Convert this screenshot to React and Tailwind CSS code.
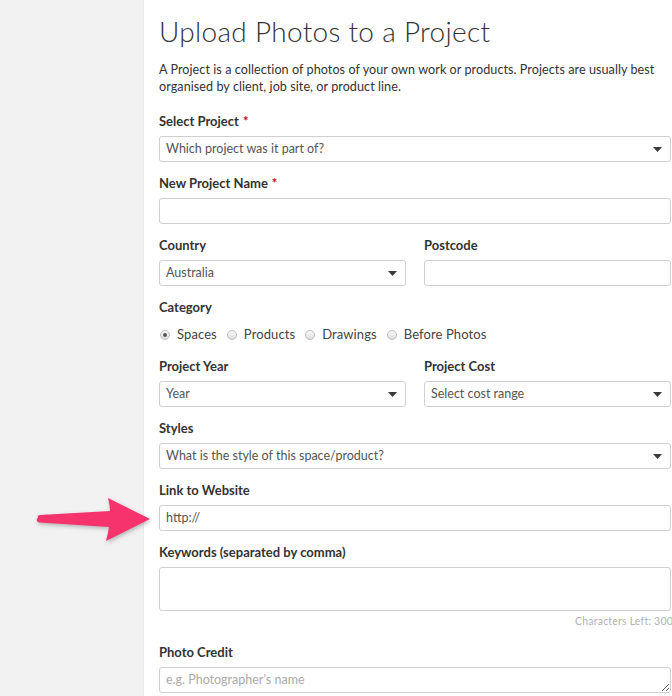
import React from "react";

const font = { fontFamily: "Lato, 'Open Sans', Arial, sans-serif" };

function Label({ children, required }) {
  return (
    <div className="h-[16px] text-[13px] leading-[16px] font-bold text-[#333] mb-[7px]">
      {children}
      {required && <span className="text-[#d0021b] ml-[4px]">*</span>}
    </div>
  );
}

function Caret() {
  return (
    <svg width="9" height="5" viewBox="0 0 9 5" className="shrink-0">
      <path d="M0 0 H9 L4.5 5 Z" fill="#3a3a3a" />
    </svg>
  );
}

function Select({ value }) {
  return (
    <div className="h-[26px] border border-[#cfcfcf] rounded-[3px] bg-white flex items-center justify-between pl-[6px] pr-[8px] text-[12.5px] text-[#555]">
      <span>{value}</span>
      <Caret />
    </div>
  );
}

function TextInput({ value, placeholder }) {
  return (
    <div className="h-[26px] border border-[#cfcfcf] rounded-[3px] bg-white flex items-center pl-[6px] text-[12.5px]">
      {value ? (
        <span className="text-[#555]">{value}</span>
      ) : (
        <span className="text-[#aaa]">{placeholder}</span>
      )}
    </div>
  );
}

function Radio({ label, checked }) {
  return (
    <label className="flex items-center gap-[7px] mr-[10px]">
      <span className="w-[10px] h-[10px] rounded-full border border-[#bdbdbd] bg-gradient-to-b from-[#fafafa] to-[#dedede] flex items-center justify-center">
        {checked && <span className="w-[4px] h-[4px] rounded-full bg-[#555]" />}
      </span>
      <span className="text-[13px] tracking-[0.1px] text-[#444]">{label}</span>
    </label>
  );
}

function Group({ children, className = "" }) {
  return <div className={"mt-[13px] " + className}>{children}</div>;
}

function PointerArrow() {
  return (
    <svg
      className="absolute left-0 top-0 pointer-events-none"
      width="160"
      height="696"
      viewBox="0 0 160 696"
      style={{ filter: "drop-shadow(1px 2px 2px rgba(0,0,0,0.25))" }}
    >
      <path
        d="M38 517.5 Q35 520.5 39 522.5 L109 527 Q108 534 106 541 L150 519 L108 498 Q110 505 110 511 L40 515 Q37 515.5 38 517.5 Z"
        fill="#f7336e"
      />
    </svg>
  );
}

export default function App() {
  return (
    <div className="relative flex w-[672px] h-[696px] overflow-hidden bg-white" style={font}>
      <aside className="w-[144px] shrink-0 bg-[#f2f2f2] border-r border-[#e9e9e9]" />
      <main className="flex-1 pl-[15px] pr-[1px] pt-[14px]">
        <h1 className="text-[28px] leading-[34px] font-light text-[#333] tracking-[0.3px]">
          Upload Photos to a Project
        </h1>
        <p className="mt-[13px] text-[12.6px] tracking-[0.06px] leading-[17px] text-[#333]">
          A Project is a collection of photos of your own work or products. Projects are usually best
          organised by client, job site, or product line.
        </p>

        <div className="mt-[18px]">
          <Label required>Select Project</Label>
          <Select value="Which project was it part of?" />
        </div>

        <Group>
          <Label required>New Project Name</Label>
          <TextInput />
        </Group>

        <Group className="grid grid-cols-2 gap-x-[18px]">
          <div>
            <Label>Country</Label>
            <Select value="Australia" />
          </div>
          <div>
            <Label>Postcode</Label>
            <TextInput />
          </div>
        </Group>

        <Group>
          <div className="h-[16px] text-[13px] leading-[16px] font-bold text-[#333] mb-[10px]">Category</div>
          <div className="h-[20px] flex items-center pl-[1px]">
            <Radio label="Spaces" checked />
            <Radio label="Products" />
            <Radio label="Drawings" />
            <Radio label="Before Photos" />
          </div>
        </Group>

        <Group className="grid grid-cols-2 gap-x-[18px]">
          <div>
            <Label>Project Year</Label>
            <Select value="Year" />
          </div>
          <div>
            <Label>Project Cost</Label>
            <Select value="Select cost range" />
          </div>
        </Group>

        <Group>
          <Label>Styles</Label>
          <Select value="What is the style of this space/product?" />
        </Group>

        <Group>
          <Label>Link to Website</Label>
          <TextInput value="http://" />
        </Group>

        <Group>
          <Label>Keywords (separated by comma)</Label>
          <textarea className="block w-full h-[44px] border border-[#cfcfcf] rounded-[3px] resize-none outline-none" />
          <div className="mt-[4px] h-[12px] text-right text-[10.5px] leading-[12px] tracking-[0.2px] text-[#b3b3b3] -mr-[2px]">
            Characters Left: 300
          </div>
        </Group>

        <div className="mt-[17px]">
          <Label>Photo Credit</Label>
          <textarea
            rows={1}
            placeholder="e.g. Photographer's name"
            className="block w-full h-[26px] border border-[#cfcfcf] rounded-[3px] px-[6px] py-[4px] text-[12.5px] leading-[16px] placeholder:text-[#aaa] outline-none"
          />
        </div>
      </main>
      <PointerArrow />
    </div>
  );
}
